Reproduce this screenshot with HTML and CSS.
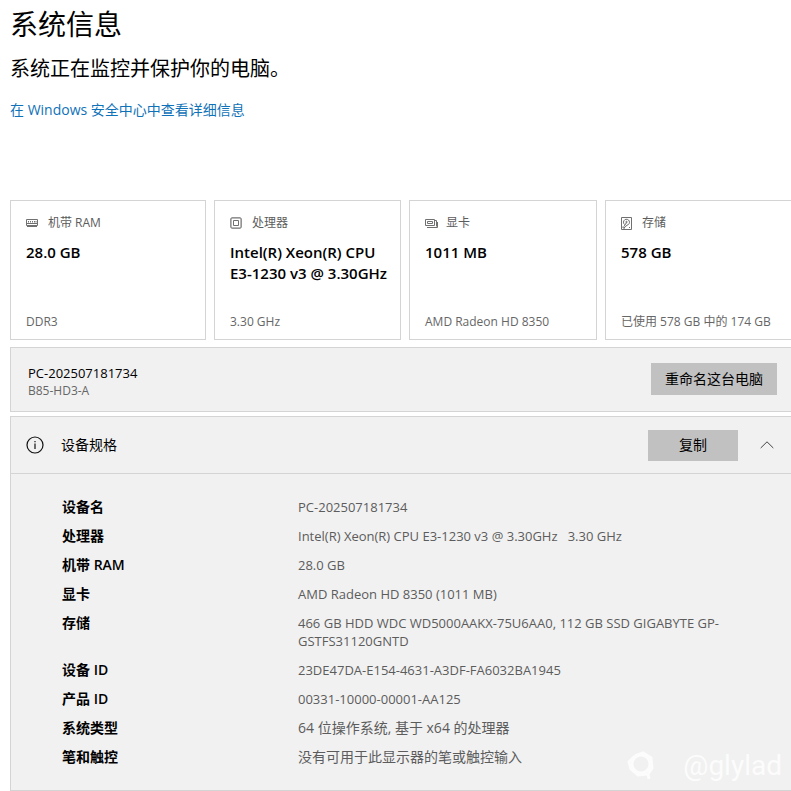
FILE: index.html
```
<!DOCTYPE html>
<html lang="zh-CN">

<head>
    <meta charset="UTF-8">
    <meta name="viewport" content="width=device-width, initial-scale=1">
    <title>系统信息</title>
    <link rel="stylesheet" href="styles.css">
</head>

<body>
    <main>
        <header class="intro">
            <h1>系统信息</h1>
            <p>系统正在监控并保护你的电脑。</p>
            <a href="#">在 Windows 安全中心中查看详细信息</a>
        </header>

        <section class="cards">
            <article class="card">
                <h2>
                    <svg class="icon" width="12" height="12" viewBox="0 0 12 12">
                        <path d="M.5 2.5h11v6H.5zM2.5 4v1.5M4.5 4v1.5M6.5 4v1.5M8.5 4v1.5M10 4v1.5M1 6.5h10M1 9.5h10"/>
                    </svg>
                    <span>机带 RAM</span>
                </h2>
                <strong>28.0 GB</strong>
                <small>DDR3</small>
            </article>
            <article class="card">
                <h2>
                    <svg class="icon" width="12" height="12" viewBox="0 0 12 12">
                        <path d="M1 1h10v10H1zM3.5 3.5h5v5h-5z"/>
                        <path d="M3 0v1M5 0v1M7 0v1M9 0v1M3 11v1M5 11v1M7 11v1M9 11v1M0 3h1M0 5h1M0 7h1M0 9h1M11 3h1M11 5h1M11 7h1M11 9h1"/>
                    </svg>
                    <span>处理器</span>
                </h2>
                <strong>Intel(R) Xeon(R) CPU<br>E3-1230 v3 @ 3.30GHz</strong>
                <small>3.30 GHz</small>
            </article>
            <article class="card card-gpu">
                <h2>
                    <svg class="icon" width="13" height="12" viewBox="0 0 13 12">
                        <path d="M.5 2.5h9v6h-9zM2.5 4.5h5v2h-5zM10 3.5h1.5v6M2 10.5h10.5V5"/>
                    </svg>
                    <span>显卡</span>
                </h2>
                <strong>1011 MB</strong>
                <small>AMD Radeon HD 8350</small>
            </article>
            <article class="card card-disk">
                <h2>
                    <svg class="icon" width="11" height="13" viewBox="0 0 11 13">
                        <path d="M.5.5h10v12H.5zM3.5 7.5A3 3 0 1 1 6 8.2L3 11M5.5 5.5L3 9.5M2 9.5v1.5h2M8 10.5h1"/>
                        <circle cx="5.5" cy="5" r=".7"/>
                    </svg>
                    <span>存储</span>
                </h2>
                <strong>578 GB</strong>
                <small>已使用 578 GB 中的 174 GB</small>
            </article>
        </section>

        <section class="panel pc">
            <div class="pc-name">
                <b>PC-202507181734</b>
                <small>B85-HD3-A</small>
            </div>
            <button type="button" class="btn btn-rename">重命名这台电脑</button>
        </section>

        <section class="panel specs">
            <div class="specs-head">
                <svg class="info" width="18" height="18" viewBox="0 0 18 18">
                    <circle cx="9" cy="9" r="8"/>
                    <path d="M9 7.5V13M9 5v1.3"/>
                </svg>
                <h2>设备规格</h2>
                <button type="button" class="btn btn-copy">复制</button>
                <button type="button" class="toggle" aria-label="折叠">
                    <svg width="14" height="8" viewBox="0 0 14 8"><path d="M.7 7L7 .8 13.3 7"/></svg>
                </button>
            </div>
            <table>
                <tr><th scope="row">设备名</th><td>PC-202507181734</td></tr>
                <tr><th scope="row">处理器</th><td>Intel(R) Xeon(R) CPU E3-1230 v3 @ 3.30GHz &nbsp; 3.30 GHz</td></tr>
                <tr><th scope="row">机带 RAM</th><td>28.0 GB</td></tr>
                <tr><th scope="row">显卡</th><td>AMD Radeon HD 8350 (1011 MB)</td></tr>
                <tr><th scope="row">存储</th><td>466 GB HDD WDC WD5000AAKX-75U6AA0, 112 GB SSD GIGABYTE GP-<br>GSTFS31120GNTD</td></tr>
                <tr><th scope="row">设备 ID</th><td>23DE47DA-E154-4631-A3DF-FA6032BA1945</td></tr>
                <tr><th scope="row">产品 ID</th><td>00331-10000-00001-AA125</td></tr>
                <tr><th scope="row">系统类型</th><td class="cn">64 位操作系统, 基于 x64 的处理器</td></tr>
                <tr><th scope="row">笔和触控</th><td class="cn">没有可用于此显示器的笔或触控输入</td></tr>
            </table>
            <div class="watermark">
                <svg width="28" height="30" viewBox="0 0 28 30">
                    <path d="M8 5L16 2 24 7 25 17 21 23 22 28M21 23L11 24 4 18 2 11 8 5"/>
                    <circle cx="14" cy="13" r="9"/>
                </svg>
                <span>@glylad</span>
            </div>
        </section>
    </main>
</body>

</html>
```

FILE: styles.css
```
* {
    box-sizing: border-box;
    margin: 0;
    padding: 0;
}

body {
    background: #fff;
    color: #000;
    font: 14px/18px "Open Sans", "Noto Sans CJK SC", sans-serif;
}

main {
    padding-left: 10px;
}

svg {
    fill: none;
    flex: none;
}

button {
    border: 0;
    font: inherit;
    color: inherit;
}

/* 顶部标题 */
.intro {
    height: 200px;
}

.intro h1 {
    font-size: 28px;
    line-height: 48px;
    font-weight: 400;
}

.intro p {
    font-size: 20px;
    line-height: 42px;
}

.intro a {
    display: inline-block;
    margin-top: 10px;
    line-height: 20px;
    color: #0f72b8;
    text-decoration: none;
}

/* 四个卡片 */
.cards {
    display: grid;
    grid-template-columns: 196fr 187fr 188fr 186fr;
    gap: 8px;
}

.card {
    display: flex;
    flex-direction: column;
    min-width: 0;
    height: 140px;
    padding: 13px 0 8px 15px;
    border: 1px solid #d4d4d4;
    white-space: nowrap;
}

.card:last-child {
    border-right: 0;
}

.card h2 {
    display: flex;
    align-items: center;
    gap: 10px;
    font-size: 12px;
    font-weight: 400;
    color: #5c5c5c;
}

.card-gpu h2 {
    gap: 8px;
}

.card strong {
    margin-top: 10px;
    font-size: 15px;
    line-height: 21px;
    font-weight: 600;
}

.card small {
    margin-top: auto;
    font-size: 12px;
    color: #666;
}

.icon {
    stroke: #707070;
}

/* 面板 */
.panel {
    background: #f1f1f1;
    border: 1px solid #d4d4d4;
    border-right: 0;
}

.btn {
    background: #c1c1c1;
    font-size: 14px;
}

.pc {
    display: flex;
    align-items: flex-start;
    justify-content: space-between;
    height: 65px;
    margin-top: 7px;
    padding: 15px 14px 0 17px;
}

.pc-name b,
.pc-name small {
    display: block;
    font-weight: 400;
}

.pc-name b {
    font-size: 13px;
    line-height: 20px;
}

.pc-name small {
    font-size: 12px;
    line-height: 16px;
    color: #666;
}

.btn-rename {
    width: 126px;
    height: 32px;
}

.specs {
    position: relative;
    margin-top: 4px;
    padding-bottom: 13px;
}

.specs-head {
    display: flex;
    align-items: center;
    height: 57px;
    padding: 0 17px 0 15px;
    border-bottom: 1px solid #d4d4d4;
}

.specs-head h2 {
    flex: 1;
    margin-left: 17px;
    font-size: 14px;
    font-weight: 400;
}

.info {
    stroke: #111;
    stroke-width: 1.2;
}

.btn-copy {
    width: 90px;
    height: 31px;
}

.toggle {
    display: flex;
    margin-left: 22px;
    background: none;
}

.toggle svg {
    stroke: #444;
}

table {
    width: 100%;
    margin-top: 24px;
    border-spacing: 0;
}

th,
td {
    padding-bottom: 11px;
    text-align: left;
    vertical-align: top;
}

th {
    width: 287px;
    padding-left: 51px;
    font-size: 14px;
    font-weight: 600;
}

td {
    font-size: 13px;
    color: #5c5c5c;
}

td.cn {
    font-size: 14px;
}

/* 水印 */
.watermark {
    position: absolute;
    right: 9px;
    bottom: 7px;
    display: flex;
    align-items: center;
    gap: 28px;
    color: #fcfcfc;
    font: 28px/34px Roboto, sans-serif;
}

.watermark svg {
    stroke: #fcfcfc;
    stroke-width: 3;
}
```
